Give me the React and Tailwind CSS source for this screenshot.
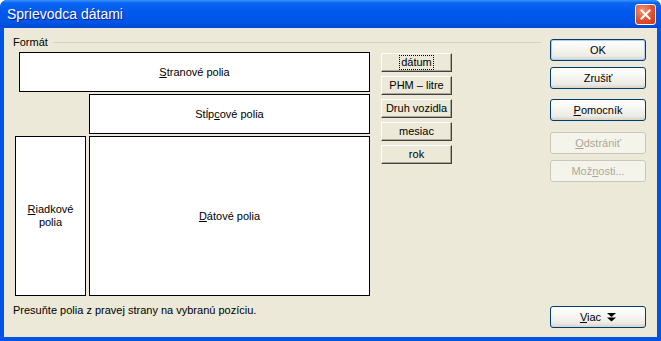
// App.jsx – "Sprievodca dátami" dialog (Windows XP style)

const font = { fontFamily: '"Liberation Sans", Arial, sans-serif' };

function XpButton({ children, disabled, isDefault, className = "" }) {
  return (
    <div
      className={
        "flex h-[22px] w-[96px] items-center justify-center rounded-[3px] border text-[11px] " +
        (disabled
          ? "border-[#c9c7ba] bg-[#f5f4ea] text-[#aca899] "
          : "border-[#003c74] bg-[linear-gradient(180deg,#ffffff_0%,#f7f7f3_40%,#ecebe5_80%,#d8d3c8_100%)] text-black ") +
        (isDefault ? "shadow-[inset_0_0_0_1px_#b6cdf2] " : "") +
        className
      }
    >
      {children}
    </div>
  );
}

function FieldButton({ children, focused }) {
  return (
    <div className="flex h-[19px] w-[71px] items-center justify-center border border-t-white border-l-white border-b-[#404040] border-r-[#404040] bg-[#ece9d8] text-[11px] text-black shadow-[inset_-1px_-1px_0_#aca899]">
      <span className={focused ? "border border-dotted border-black px-[1px] leading-[13px]" : "leading-[13px]"}>{children}</span>
    </div>
  );
}

function Box({ children, className = "" }) {
  return (
    <div className={"flex items-center justify-center border border-black bg-white text-center text-[11px] leading-[13px] text-black " + className}>
      {children}
    </div>
  );
}

export default function App() {
  return (
    <div className="h-[341px] w-[661px] bg-white" style={font}>
      <div className="flex h-[341px] w-[661px] flex-col overflow-hidden rounded-t-[7px] bg-[#0055e5]">
        {/* title bar */}
        <div className="flex h-[28px] shrink-0 items-center justify-between bg-[linear-gradient(180deg,#3d95ff_0%,#0a66f0_10%,#0058ee_45%,#0055e5_80%,#0048d0_100%)] pl-[7px] pr-[5px]">
          <span className="text-[14px] text-white [text-shadow:1px_1px_0_#0a1e8a]">Sprievodca dátami</span>
          <div className="flex h-[21px] w-[21px] items-center justify-center rounded-[3px] border border-white bg-[radial-gradient(circle_at_35%_30%,#f0977a_0%,#e0502c_55%,#c8391b_100%)]">
            <svg width="11" height="11" viewBox="0 0 11 11">
              <path d="M1.5 1.5 L9.5 9.5 M9.5 1.5 L1.5 9.5" stroke="white" strokeWidth="2" strokeLinecap="square" />
            </svg>
          </div>
        </div>

        {/* body */}
        <div className="mx-[4px] mb-[4px] flex flex-1 border-l border-[#ece9d8] bg-[#ece9d8] pl-[8px] pt-[8px] text-[11px] text-black">
          {/* format group */}
          <div className="flex w-[528px] flex-col">
            <div className="flex h-[13px] items-center">
              <span className="leading-[13px]">Formát</span>
              <div className="ml-[5px] h-[2px] flex-1 border-t border-[#d0d0bf] border-b-white" />
            </div>
            <div className="mt-[3px] flex">
              <div className="flex w-[357px] flex-col">
                <Box className="ml-[6px] h-[40px] w-[351px]">
                  <span><u>S</u>tranové polia</span>
                </Box>
                <Box className="ml-[76px] mt-[2px] h-[40px] w-[281px]">
                  <span>Stĺp<u>c</u>ové polia</span>
                </Box>
                <div className="ml-[2px] mt-[2px] flex gap-[3px]">
                  <Box className="h-[160px] w-[71px]">
                    <span><u>R</u>iadkové<br />polia</span>
                  </Box>
                  <Box className="h-[160px] w-[281px]">
                    <span><u>D</u>átové polia</span>
                  </Box>
                </div>
              </div>
              <div className="ml-[11px] mt-[1px] flex flex-col gap-[4px]">
                <FieldButton focused>dátum</FieldButton>
                <FieldButton>PHM – litre</FieldButton>
                <FieldButton>Druh vozidla</FieldButton>
                <FieldButton>mesiac</FieldButton>
                <FieldButton>rok</FieldButton>
              </div>
            </div>
            <div className="mt-[8px] leading-[13px]">Presuňte polia z pravej strany na vybranú pozíciu.</div>
          </div>

          {/* right buttons */}
          <div className="ml-[9px] flex flex-col pt-[3px] pb-[9px]">
            <XpButton isDefault>OK</XpButton>
            <XpButton className="mt-[6px]">Zrušiť</XpButton>
            <XpButton className="mt-[10px]"><span><u>P</u>omocník</span></XpButton>
            <XpButton disabled className="mt-[11px]"><span><u>O</u>dstrániť</span></XpButton>
            <XpButton disabled className="mt-[6px]"><span>Mož<u>n</u>osti...</span></XpButton>
            <XpButton className="mt-auto">
              <span><u>V</u>iac</span>
              <svg className="ml-[6px]" width="9" height="9" viewBox="0 0 9 9">
                <path d="M0 0 H9 L4.5 4 Z M0 4.5 H9 L4.5 8.5 Z" fill="black" />
              </svg>
            </XpButton>
          </div>
        </div>
      </div>
    </div>
  );
}
